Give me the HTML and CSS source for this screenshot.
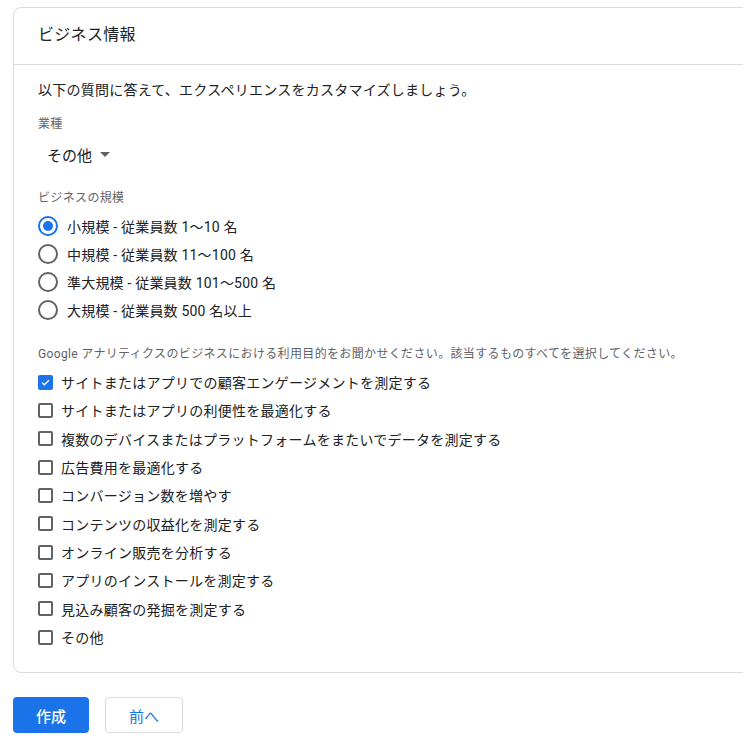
FILE: index.html
```html
<!DOCTYPE html>
<html lang="ja">

<head>
    <meta charset="UTF-8">
    <meta name="viewport" content="width=device-width, initial-scale=1.0">
    <title>ビジネス情報</title>
    <link rel="stylesheet" href="styles.css">
</head>

<body>
    <div class="card">
        <div class="card-header">ビジネス情報</div>

        <div class="card-body">
            <p class="intro">以下の質問に答えて、エクスペリエンスをカスタマイズしましょう。</p>

            <div class="field-label">業種</div>
            <div class="select">
                <span>その他</span>
                <span class="select-arrow"></span>
            </div>

            <div class="field-label size-label">ビジネスの規模</div>
            <div class="radio-group">
                <label class="radio-row">
                    <span class="radio checked"></span>
                    <span>小規模 - 従業員数 1〜10 名</span>
                </label>
                <label class="radio-row">
                    <span class="radio"></span>
                    <span>中規模 - 従業員数 11〜100 名</span>
                </label>
                <label class="radio-row">
                    <span class="radio"></span>
                    <span>準大規模 - 従業員数 101〜500 名</span>
                </label>
                <label class="radio-row">
                    <span class="radio"></span>
                    <span>大規模 - 従業員数 500 名以上</span>
                </label>
            </div>

            <div class="field-label purpose-label">Google アナリティクスのビジネスにおける利用目的をお聞かせください。該当するものすべてを選択してください。</div>
            <div class="check-group">
                <label class="check-row">
                    <span class="checkbox checked">
                        <svg viewBox="0 0 16 16" width="13" height="13"><path d="M3 8.2l3.2 3.2L13 4.6" fill="none" stroke="#fff" stroke-width="2"/></svg>
                    </span>
                    <span>サイトまたはアプリでの顧客エンゲージメントを測定する</span>
                </label>
                <label class="check-row">
                    <span class="checkbox"></span>
                    <span>サイトまたはアプリの利便性を最適化する</span>
                </label>
                <label class="check-row">
                    <span class="checkbox"></span>
                    <span>複数のデバイスまたはプラットフォームをまたいでデータを測定する</span>
                </label>
                <label class="check-row">
                    <span class="checkbox"></span>
                    <span>広告費用を最適化する</span>
                </label>
                <label class="check-row">
                    <span class="checkbox"></span>
                    <span>コンバージョン数を増やす</span>
                </label>
                <label class="check-row">
                    <span class="checkbox"></span>
                    <span>コンテンツの収益化を測定する</span>
                </label>
                <label class="check-row">
                    <span class="checkbox"></span>
                    <span>オンライン販売を分析する</span>
                </label>
                <label class="check-row">
                    <span class="checkbox"></span>
                    <span>アプリのインストールを測定する</span>
                </label>
                <label class="check-row">
                    <span class="checkbox"></span>
                    <span>見込み顧客の発掘を測定する</span>
                </label>
                <label class="check-row">
                    <span class="checkbox"></span>
                    <span>その他</span>
                </label>
            </div>
        </div>
    </div>

    <div class="actions">
        <button class="btn btn-primary">作成</button>
        <button class="btn btn-secondary">前へ</button>
    </div>
</body>

</html>
```

FILE: styles.css
```css
/* Global Styles */
* {
    box-sizing: border-box;
    margin: 0;
    padding: 0;
}

body {
    font-family: Roboto, "Noto Sans CJK JP", sans-serif;
    color: #202124;
    background: #fff;
    padding: 7px 0 0 13px;
    overflow: hidden;
}

/* Card */
.card {
    width: 760px;
    border: 1px solid #dadce0;
    border-radius: 8px;
}

.card-header {
    font-size: 16px;
    line-height: 24px;
    letter-spacing: 0.3px;
    padding: 15px 24px 17px;
    border-bottom: 1px solid #dadce0;
}

.card-body {
    padding: 15px 24px 21px;
}

.intro {
    font-size: 14px;
    line-height: 20px;
    letter-spacing: 0.25px;
}

.field-label {
    font-size: 12px;
    line-height: 16px;
    letter-spacing: 0.35px;
    color: #5f6368;
    margin-top: 16px;
}

.size-label {
    margin-top: 18px;
}

.purpose-label {
    margin-top: 22px;
}

/* Dropdown */
.select {
    display: flex;
    align-items: center;
    height: 36px;
    margin-top: 4px;
    padding-left: 9px;
    font-size: 15px;
}

.select-arrow {
    width: 0;
    height: 0;
    margin-left: 8px;
    border-left: 5px solid transparent;
    border-right: 5px solid transparent;
    border-top: 5px solid #5f6368;
}

/* Radios */
.radio-group {
    margin-top: 6px;
}

.radio-row {
    display: flex;
    align-items: center;
    height: 28px;
    font-size: 14px;
    letter-spacing: 0.2px;
}

.radio {
    width: 20px;
    height: 20px;
    border: 2px solid #5f6368;
    border-radius: 50%;
    margin-right: 9px;
    display: flex;
    align-items: center;
    justify-content: center;
}

.radio.checked {
    border-color: #1a73e8;
}

.radio.checked::after {
    content: "";
    width: 10px;
    height: 10px;
    border-radius: 50%;
    background: #1a73e8;
}

/* Checkboxes */
.check-group {
    margin-top: 6px;
}

.check-row {
    display: flex;
    align-items: center;
    height: 28.33px;
    font-size: 14px;
    letter-spacing: 0.25px;
}

.checkbox {
    width: 15px;
    height: 15px;
    border: 2px solid #5f6368;
    border-radius: 2px;
    margin-right: 8px;
    display: flex;
    align-items: center;
    justify-content: center;
}

.checkbox.checked {
    background: #1a73e8;
    border-color: #1a73e8;
}

/* Buttons */
.actions {
    display: flex;
    gap: 16px;
    margin-top: 24px;
}

.btn {
    height: 36px;
    border-radius: 4px;
    font-family: inherit;
    font-size: 15px;
    font-weight: 500;
    cursor: pointer;
}

.btn-primary {
    width: 76px;
    background: #1a73e8;
    color: #fff;
    border: none;
}

.btn-secondary {
    width: 78px;
    background: #fff;
    color: #1a73e8;
    border: 1px solid #dadce0;
    font-weight: 400;
}
```
